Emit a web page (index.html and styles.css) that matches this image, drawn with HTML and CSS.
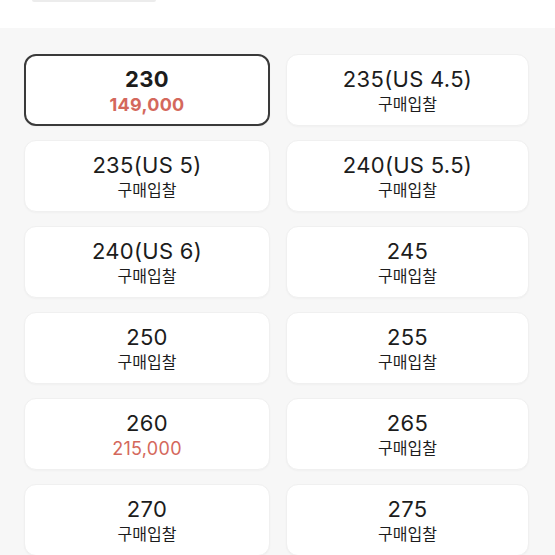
FILE: index.html
```html
<!DOCTYPE html>
<html lang="ko">
  <head>
    <meta charset="utf-8"/>
    <title>사이즈 선택</title>
    <link rel="stylesheet" href="styles.css">
  </head>
  <body>
    <header class="top">
      <div class="top-tab"></div>
    </header>

    <main class="sizes">
      <button class="size selected">
        <span class="label bold">230</span>
        <span class="price bold">149,000</span>
      </button>
      <button class="size">
        <span class="label">235(US 4.5)</span>
        <span class="bid">구매입찰</span>
      </button>
      <button class="size">
        <span class="label">235(US 5)</span>
        <span class="bid">구매입찰</span>
      </button>
      <button class="size">
        <span class="label">240(US 5.5)</span>
        <span class="bid">구매입찰</span>
      </button>
      <button class="size">
        <span class="label">240(US 6)</span>
        <span class="bid">구매입찰</span>
      </button>
      <button class="size">
        <span class="label">245</span>
        <span class="bid">구매입찰</span>
      </button>
      <button class="size">
        <span class="label">250</span>
        <span class="bid">구매입찰</span>
      </button>
      <button class="size">
        <span class="label">255</span>
        <span class="bid">구매입찰</span>
      </button>
      <button class="size">
        <span class="label">260</span>
        <span class="price">215,000</span>
      </button>
      <button class="size">
        <span class="label">265</span>
        <span class="bid">구매입찰</span>
      </button>
      <button class="size">
        <span class="label">270</span>
        <span class="bid">구매입찰</span>
      </button>
      <button class="size">
        <span class="label">275</span>
        <span class="bid">구매입찰</span>
      </button>
    </main>
  </body>
</html>
```

FILE: styles.css
```css
html, body {
  margin: 0;
  padding: 0;
}
body {
  background-color: #f7f7f7;
  font-family: "Inter", "Noto Sans CJK KR", sans-serif;
  color: #1c1c1c;
  overflow: hidden;
}
.top {
  background-color: #fff;
  height: 28px;
}
.top-tab {
  margin-left: 32px;
  width: 124px;
  height: 2px;
  background-color: #ececec;
  border-radius: 0 0 3px 3px;
}
.sizes {
  display: grid;
  grid-template-columns: 246px 243px;
  column-gap: 16px;
  row-gap: 14px;
  padding: 26px 26px 0 24px;
}
.size {
  height: 72px;
  background-color: #fff;
  border: 1px solid #f0f0f0;
  border-radius: 12px;
  box-shadow: 0 1px 2px rgba(0, 0, 0, 0.03);
  display: flex;
  flex-direction: column;
  align-items: center;
  justify-content: center;
  font-family: inherit;
  color: inherit;
  padding: 2px 0 0;
  gap: 1px;
}
.size.selected {
  border: 2px solid #3a3a3a;
}
.label {
  font-size: 22px;
  line-height: 25px;
  font-weight: 400;
  letter-spacing: 0.3px;
}
.bold {
  font-weight: 700;
}
.price {
  font-size: 18px;
  line-height: 23px;
  letter-spacing: 0.3px;
  color: #d4685c;
}
.bid {
  font-size: 16px;
  line-height: 23px;
}
```
